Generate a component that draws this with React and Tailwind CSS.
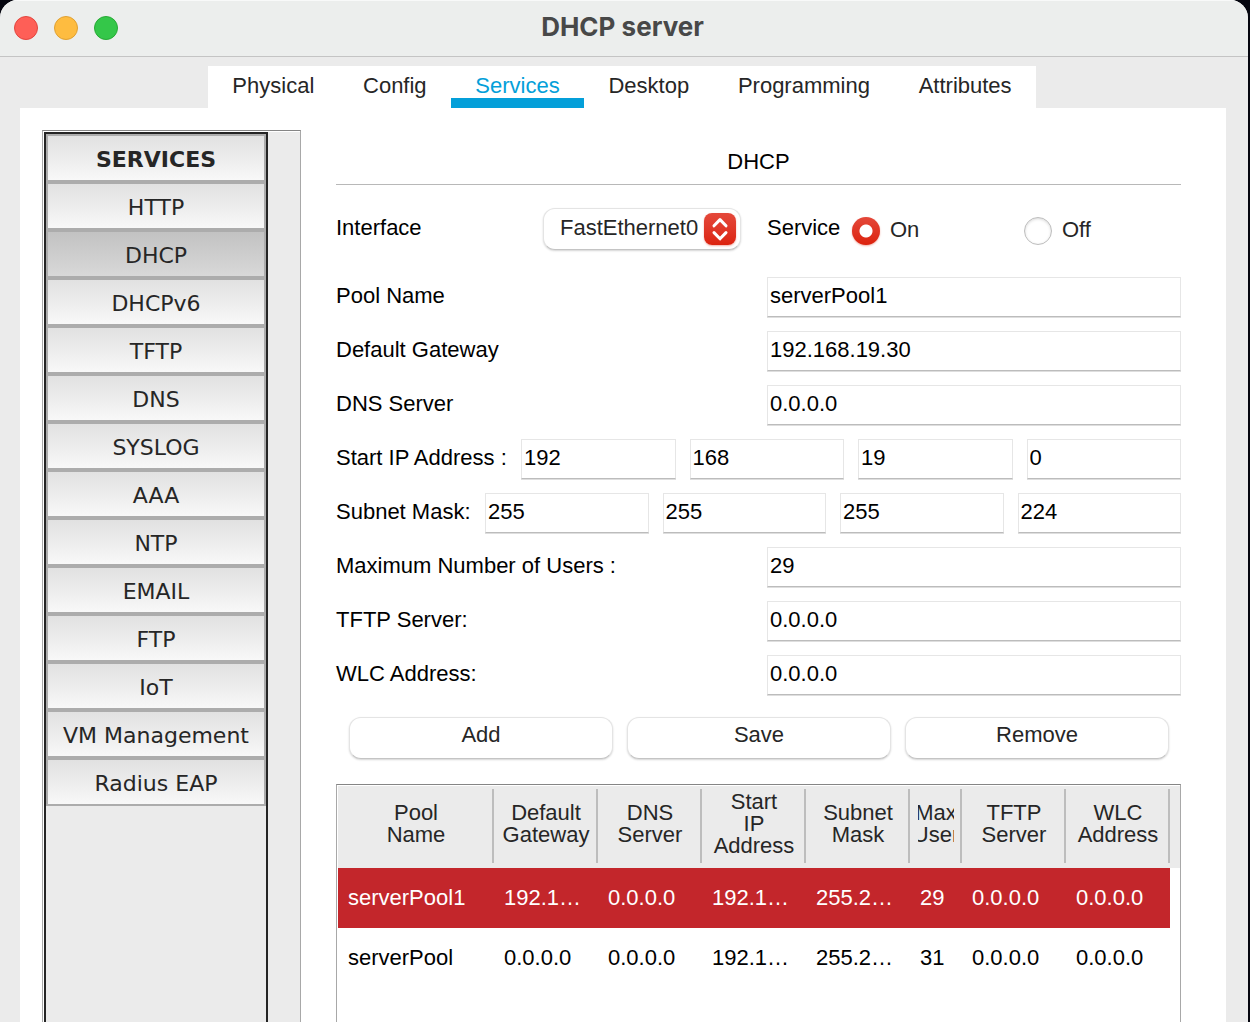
import React, { useState } from 'react';

const TABS = ['Physical', 'Config', 'Services', 'Desktop', 'Programming', 'Attributes'];

const SERVICES = [
  'HTTP', 'DHCP', 'DHCPv6', 'TFTP', 'DNS', 'SYSLOG', 'AAA', 'NTP',
  'EMAIL', 'FTP', 'IoT', 'VM Management', 'Radius EAP',
];

const COLUMNS = [
  { title: 'Pool\nName', width: 'w-[156px]' },
  { title: 'Default\nGateway', width: 'w-[104px]' },
  { title: 'DNS\nServer', width: 'w-[104px]' },
  { title: 'Start\nIP\nAddress', width: 'w-[104px]' },
  { title: 'Subnet\nMask', width: 'w-[104px]' },
  { title: 'Max\nUser', width: 'w-[52px]', clip: true },
  { title: 'TFTP\nServer', width: 'w-[104px]' },
  { title: 'WLC\nAddress', width: 'w-[104px]' },
];

const POOLS = [
  ['serverPool1', '192.1…', '0.0.0.0', '192.1…', '255.2…', '29', '0.0.0.0', '0.0.0.0'],
  ['serverPool', '0.0.0.0', '0.0.0.0', '192.1…', '255.2…', '31', '0.0.0.0', '0.0.0.0'],
];

const FIELD =
  'h-10 w-full min-w-0 rounded-none border border-[#e6e6e6] border-b-[#bcbcbc] bg-white pl-0.5 pb-[3px] text-[22px] text-black shadow-[0_1px_0_#dedede] outline-none';

function TitleBar() {
  return (
    <header className="grid h-[57px] shrink-0 grid-cols-[1fr_auto_1fr] border-t border-b border-t-[#f8f9f9] border-b-[#c4c4c4] bg-[#eceeed] pr-[17px] pl-3.5">
      <div className="flex gap-4 pt-[15px]">
        <button aria-label="Close" className="size-6 rounded-full border border-[#e2463f] bg-[#fe5f57]" />
        <button aria-label="Minimize" className="size-6 rounded-full border border-[#dfa033] bg-[#febc40]" />
        <button aria-label="Zoom" className="size-6 rounded-full border border-[#27a935] bg-[#34c749]" />
      </div>
      <h1 className="pt-2.5 font-['Inter',sans-serif] text-[26px] leading-8 font-bold text-[#484848]">DHCP server</h1>
    </header>
  );
}

function Tabs() {
  const [active, setActive] = useState('Services');
  return (
    <nav role="tablist" className="flex justify-center pt-[9px] pr-1">
      <div className="flex w-[828px] max-w-full bg-white">
        {TABS.map((t) => (
          <button
            key={t}
            role="tab"
            aria-selected={t === active}
            onClick={() => setActive(t)}
            className={`flex-auto border-b-10 px-6 pt-2 leading-6 ${
              t === active ? 'border-[#049fd9] text-[#049fd9]' : 'border-white text-[#262626]'
            }`}
          >
            {t}
          </button>
        ))}
      </div>
    </nav>
  );
}

function Sidebar() {
  const [active, setActive] = useState('DHCP');
  return (
    <aside className="flex w-[259px] shrink-0 border border-b-0 border-[#a8a8a8] border-t-[#858585] bg-white pt-px pl-px">
      <div className="flex grow bg-[#ebebeb]">
        <div className="flex w-56 flex-col border-2 border-b-0 border-[#242424] font-['DejaVu_Sans',sans-serif] text-[#262626]">
          <h2 className="h-12 border-2 border-[#acacac] bg-linear-to-b from-[#e1e1e1] to-[#f8f8f8] pt-0.5 text-center leading-[44px] font-bold">
            SERVICES
          </h2>
          {SERVICES.map((s) => (
            <button
              key={s}
              onClick={() => setActive(s)}
              className={`h-12 border-2 border-[#acacac] bg-linear-to-b pt-1 leading-10 ${
                s === active ? 'from-[#c2c2c2] to-[#d8d8d8]' : 'from-[#e1e1e1] to-[#f8f8f8]'
              }`}
            >
              {s}
            </button>
          ))}
        </div>
      </div>
    </aside>
  );
}

function InterfaceSelect() {
  return (
    <div className="relative w-[198px]">
      <select
        id="interface"
        className="h-[42px] w-full appearance-none rounded-xl border border-[#e4e4e4] border-b-[#c4c4c4] bg-white pb-[3px] pl-4 text-[22px] text-[#262626] shadow-[0_1px_2px_#d4d4d4]"
      >
        <option>FastEthernet0</option>
      </select>
      <span className="pointer-events-none absolute top-[5px] right-[5px] size-8 rounded-lg bg-linear-to-b from-[#e4483a] to-[#dc220d] shadow-[0_1px_2px_#f0b0a8]">
        <svg viewBox="0 0 32 32" className="size-8" fill="none" stroke="white" strokeWidth="3" strokeLinecap="round" strokeLinejoin="round">
          <path d="M10 12.800 16 6.600l6 6.200M10 19.600l6 6.200 6-6.200" />
        </svg>
      </span>
    </div>
  );
}

function Radio({ label, checked }) {
  return (
    <label className="flex items-center gap-2.5 text-[#262626]">
      <input
        type="radio"
        name="service"
        defaultChecked={checked}
        className="size-7 shrink-0 appearance-none rounded-full border border-[#bdbdbd] bg-white shadow-[inset_0_1px_3px_#d8d8d8] checked:border-0 checked:bg-[radial-gradient(circle,white_6px,transparent_7px),linear-gradient(#e4483a,#dc220d)] checked:shadow-[0_1px_2px_#f0b0a8]"
      />
      <span className="pb-0.5 leading-[26px]">{label}</span>
    </label>
  );
}

function Field({ id, label, value }) {
  return (
    <div className="grid grid-cols-[431fr_414fr]">
      <label htmlFor={id} className="leading-[37px]">{label}</label>
      <input id={id} type="text" defaultValue={value} className={FIELD} />
    </div>
  );
}

function OctetField({ label, labelWidth, values }) {
  return (
    <div className="flex">
      <span className={`shrink-0 leading-[37px] whitespace-nowrap ${labelWidth}`}>{label}</span>
      <div className="flex min-w-0 grow gap-3.5">
        {values.map((v, i) => (
          <input key={i} type="text" aria-label={`${label} octet ${i + 1}`} defaultValue={v} className={FIELD} />
        ))}
      </div>
    </div>
  );
}

function PoolTable() {
  const [selected, setSelected] = useState(0);
  return (
    <div className="mt-[25px] grow border border-b-0 border-[#a8a8a8] border-t-[#858585] bg-white pt-px pl-px">
      <table className="w-full table-fixed border-collapse">
        <thead>
          <tr className="h-[82px] bg-[#ebebeb]">
            {COLUMNS.map((c) => (
              <th key={c.title} scope="col" className={`p-0 align-top font-normal text-[#262626] ${c.width}`}>
                <div className="mt-[3px] flex h-[74px] items-center border-r-2 border-[#bdbdbd] pr-1.5 pb-[5px] pl-2">
                  <div className={`flex w-full justify-center ${c.clip ? 'overflow-x-clip' : ''}`}>
                    <span className="shrink-0 text-center leading-[22px] whitespace-pre">{c.title}</span>
                  </div>
                </div>
              </th>
            ))}
            <td className="p-0" />
          </tr>
        </thead>
        <tbody>
          {POOLS.map((row, r) => (
            <tr key={row[0]} className="h-[60px]" onClick={() => setSelected(r)}>
              {row.map((cell, i) => (
                <td key={i} className={`pt-0 pr-0 pb-0.5 pl-2.5 whitespace-nowrap ${r === selected ? 'bg-[#c3262b] text-white' : ''}`}>
                  {cell}
                </td>
              ))}
              <td className="p-0" />
            </tr>
          ))}
        </tbody>
      </table>
    </div>
  );
}

function DhcpPane() {
  return (
    <main className="flex min-w-0 grow flex-col text-black">
      <h2 className="border-b border-[#b8b8b8] pt-10 pb-2 text-center leading-7">DHCP</h2>
      <form className="flex flex-col" onSubmit={(e) => e.preventDefault()}>
        <div className="grid grid-cols-[431fr_414fr] pt-[23px]">
          <div className="flex justify-between pr-[26px]">
            <label htmlFor="interface" className="leading-[39px]">Interface</label>
            <InterfaceSelect />
          </div>
          <div role="radiogroup" aria-label="Service" className="flex">
            <span className="w-[85px] shrink-0 leading-[39px]">Service</span>
            <div className="grid grow grid-cols-[172fr_157fr] items-start pt-[9px]">
              <Radio label="On" checked />
              <Radio label="Off" />
            </div>
          </div>
        </div>
        <div className="mt-[27px] flex flex-col gap-3.5">
          <Field id="pool" label="Pool Name" value="serverPool1" />
          <Field id="gateway" label="Default Gateway" value="192.168.19.30" />
          <Field id="dns" label="DNS Server" value="0.0.0.0" />
          <OctetField label="Start IP Address :" labelWidth="w-[185px]" values={['192', '168', '19', '0']} />
          <OctetField label="Subnet Mask:" labelWidth="w-[149px]" values={['255', '255', '255', '224']} />
          <Field id="users" label="Maximum Number of Users :" value="29" />
          <Field id="tftp" label="TFTP Server:" value="0.0.0.0" />
          <Field id="wlc" label="WLC Address:" value="0.0.0.0" />
        </div>
        <div className="mt-[22px] grid grid-cols-3 gap-3.5 pr-3 pl-[13px]">
          {['Add', 'Save', 'Remove'].map((b) => (
            <button
              key={b}
              className="h-[42px] rounded-xl border border-[#e4e4e4] border-b-[#c4c4c4] bg-white pb-[7px] text-[#262626] shadow-[0_1px_2px_#d4d4d4]"
            >
              {b}
            </button>
          ))}
        </div>
      </form>
      <PoolTable />
    </main>
  );
}

export default function App() {
  return (
    <div className="flex min-h-screen bg-[#05060f] pr-0.5 font-['Liberation_Sans',Arial,sans-serif] text-[22px]">
      <div className="flex min-w-0 grow flex-col overflow-hidden rounded-t-[18px] bg-[#ebebeb]">
        <TitleBar />
        <Tabs />
        <div className="mr-[22px] ml-5 flex grow gap-[35px] bg-white pr-[45px] pl-[22px]">
          <div className="flex pt-[22px]">
            <Sidebar />
          </div>
          <DhcpPane />
        </div>
      </div>
    </div>
  );
}
